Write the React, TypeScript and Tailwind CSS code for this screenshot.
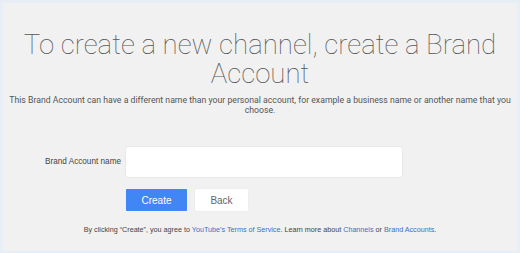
export default function App() {
  return (
    <div className="w-[520px] h-[253px] bg-[#e7eef6] pt-[3px] pl-[3px] pr-[3px] pb-[2px]">
      <div className="h-full bg-[#f1f1f1] flex flex-col items-center pt-[27px]">
        <h1 className="text-center text-[27.6px] leading-[29px] font-thin text-[#555] font-['Roboto',sans-serif] w-[490px]">
          To create a new channel, create a Brand Account
        </h1>
        <p className="mt-[7px] text-center text-[8.7px] leading-[10px] text-[#555] font-['Roboto',sans-serif] w-[512px]">
          This Brand Account can have a different name than your personal account, for example a business name or another name that you choose.
        </p>

        <div className="self-start ml-[42px] mt-[32px] flex items-center">
          <label className="w-[81px] shrink-0 text-[8.2px] text-[#444] font-['Liberation_Sans',sans-serif]">
            Brand Account name
          </label>
          <div className="w-[276px] h-[30px] bg-white rounded-[2px] shadow-[0_0_2px_rgba(0,0,0,0.12)]" />
        </div>

        <div className="self-start ml-[123px] mt-[12px] flex gap-[8px] font-['Liberation_Sans',sans-serif]">
          <button className="w-[61px] h-[22px] bg-[#4285f4] text-white text-[10px] rounded-[1px]">
            Create
          </button>
          <button className="w-[53px] h-[22px] bg-white text-[#666] text-[10px] rounded-[1px] shadow-[0_0_1px_rgba(0,0,0,0.15)]">
            Back
          </button>
        </div>

        <p className="mt-[14px] text-[7.2px] text-[#444] font-['Liberation_Sans',sans-serif]">
          By clicking “Create”, you agree to <span className="text-[#3a6fc9]">YouTube's Terms of Service</span>. Learn more about <span className="text-[#3a6fc9]">Channels</span> or <span className="text-[#3a6fc9]">Brand Accounts</span>.
        </p>
      </div>
    </div>
  );
}
